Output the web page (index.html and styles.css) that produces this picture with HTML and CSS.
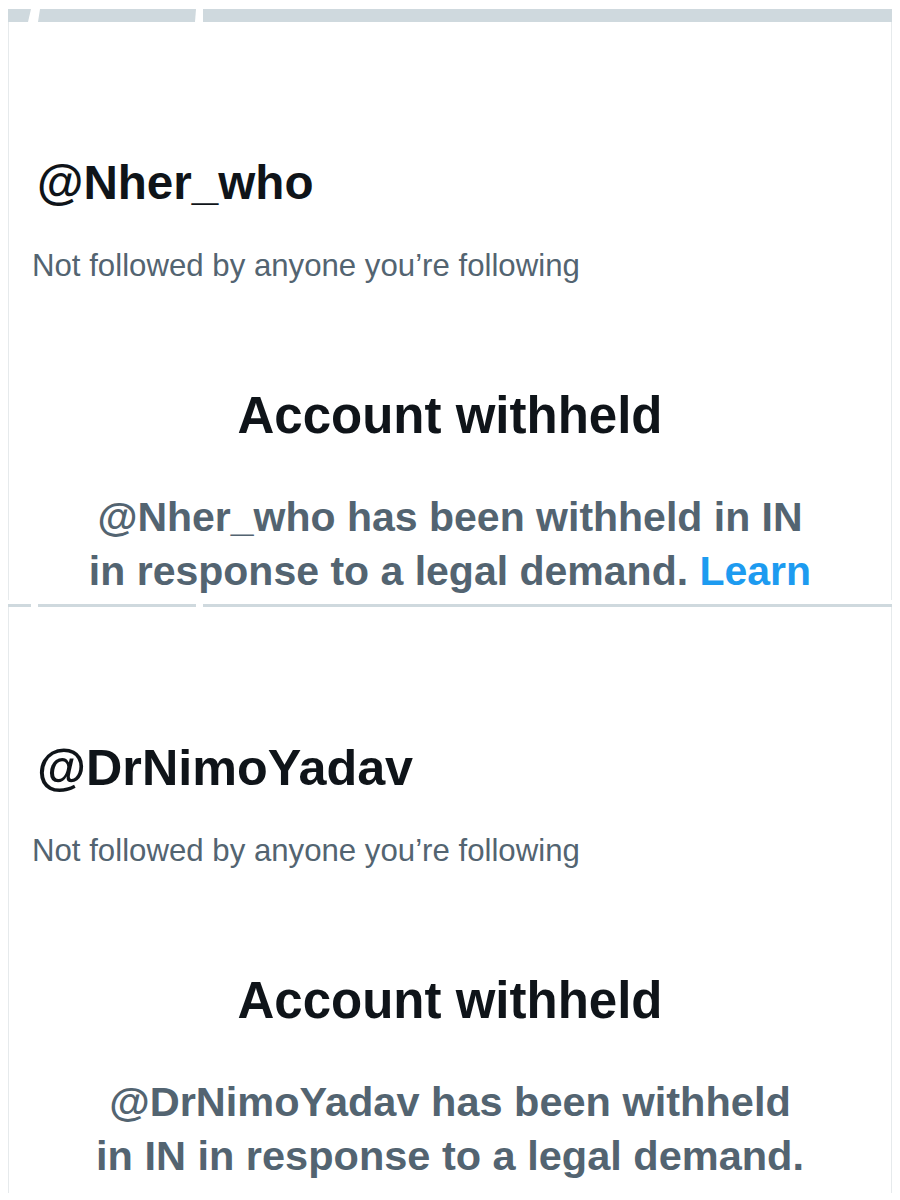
FILE: index.html
```html
<!DOCTYPE html>
<html lang="en">
<head>
<meta charset="utf-8">
<title>Account withheld</title>
<link rel="stylesheet" href="styles.css">
</head>
<body>
<div class="page">
  <section class="panel panel-first">
    <div class="banner banner-full">
      <span class="seg seg-a"></span>
      <span class="seg seg-b"></span>
      <span class="seg seg-c"></span>
    </div>
    <div class="content">
      <h2 class="handle">@Nher_who</h2>
      <p class="sub">Not followed by anyone you’re following</p>
      <h1 class="title">Account withheld</h1>
      <p class="body">@Nher_who has been withheld in IN<br>in response to a legal demand. <a class="link" href="#">Learn</a></p>
    </div>
  </section>
  <section class="panel panel-second">
    <div class="banner banner-thin">
      <span class="seg seg-a"></span>
      <span class="seg seg-b"></span>
      <span class="seg seg-c"></span>
    </div>
    <div class="content">
      <h2 class="handle">@DrNimoYadav</h2>
      <p class="sub">Not followed by anyone you’re following</p>
      <h1 class="title">Account withheld</h1>
      <p class="body">@DrNimoYadav has been withheld<br>in IN in response to a legal demand.</p>
    </div>
  </section>
</div>
</body>
</html>
```

FILE: styles.css
```css
html, body {
  margin: 0;
  padding: 0;
  background: #ffffff;
}

.page {
  width: 900px;
  height: 1200px;
  overflow: hidden;
  display: flex;
  flex-direction: column;
  font-family: "Liberation Sans", Arial, sans-serif;
}

.panel {
  margin-left: 8px;
  width: 884px;
  overflow: hidden;
  display: flex;
  flex-direction: column;
}

.panel-first {
  height: 591px;
  padding-top: 9px;
}

.panel-second {
  margin-top: 4px;
  height: 589px;
}

.banner {
  display: flex;
  gap: 7px;
  flex: none;
}

.banner-full {
  height: 13px;
}

.banner-thin {
  height: 3px;
}

.seg {
  display: block;
  height: 100%;
  background: #cfd9de;
}

.seg-a {
  width: 23px;
  clip-path: polygon(0 0, 100% 0, calc(100% - 3px) 100%, 0 100%);
}

.seg-b {
  width: 158px;
  clip-path: polygon(2px 0, 100% 0, calc(100% - 1px) 100%, 0 100%);
}

.seg-c {
  flex: 1;
}

.banner-thin .seg-a,
.banner-thin .seg-b {
  clip-path: none;
}

.content {
  flex: 1;
  border-left: 1px solid #e6eaec;
  border-right: 1px solid #e6eaec;
  padding: 133px 0 0 23px;
  display: flex;
  flex-direction: column;
}

.handle {
  margin: 0;
  padding-left: 5px;
  font-size: 47.6px;
  line-height: 56px;
  font-weight: 700;
  color: #0f1419;
}

.panel-second .handle {
  font-size: 50.3px;
}

.sub {
  margin: 37px 0 0 0;
  font-size: 31.2px;
  line-height: 36px;
  font-weight: 400;
  color: #536471;
}

.title {
  margin: 102px 0 0 -23px;
  text-align: center;
  font-size: 51px;
  line-height: 60px;
  font-weight: 700;
  color: #0f1419;
}

.body {
  margin: 44px 0 0 -23px;
  text-align: center;
  font-size: 41px;
  line-height: 54px;
  font-weight: 700;
  color: #536471;
}

.panel-second .body {
  font-size: 41.5px;
}

.link {
  color: #1d9bf0;
  text-decoration: none;
}
```
